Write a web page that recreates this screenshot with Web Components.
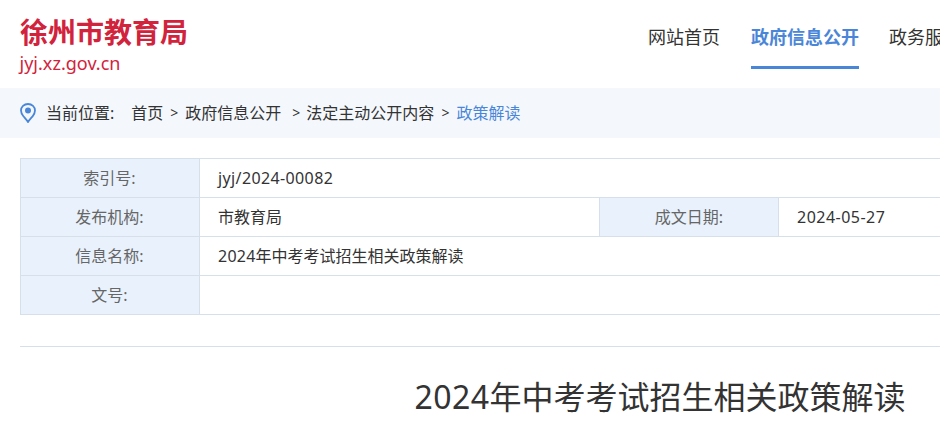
<!DOCTYPE html>
<html lang="zh"><head><meta charset="utf-8"><title>2024年中考考试招生相关政策解读</title>
<style>
html,body{margin:0;padding:0;background:#fff;overflow:hidden;height:431px}
body{font-family:"Noto Sans CJK SC","Noto Sans",sans-serif;color:#333;width:1320px}
</style></head><body>
<site-header></site-header>
<bread-crumb></bread-crumb>
<info-table></info-table>
<article-title><span style="letter-spacing:.5px">2024</span>年中考考试招生相关政策解读</article-title>
<script>
const F='"Noto Sans","Noto Sans CJK SC",sans-serif';
class Base extends HTMLElement{constructor(){super();this.attachShadow({mode:'open'}).innerHTML=this.constructor.html}}
class SiteHeader extends Base{static html=`<style>
:host{display:flex;height:88px;padding-left:20px;font-family:${F}}
.brand{flex:0 0 628px;display:flex;flex-direction:column}
.name{font-size:28px;font-weight:700;line-height:32px;margin-top:16px;color:#d2233c}
.url{font-size:18px;line-height:24px;margin:3px 0 0 0;letter-spacing:.02px;color:#d2233c;transform:translateX(-.5px)}
nav{display:flex;gap:30px;flex:none}
a{display:block;height:69px;box-sizing:border-box;font-size:18px;line-height:24px;padding-top:25px;color:#333;white-space:nowrap}
a.on{color:#4a86d8;font-weight:700;border-bottom:3px solid #4a86d8;margin-left:1px}
</style><div class="brand"><div class="name">徐州市教育局</div><div class="url">jyj.xz.gov.cn</div></div>
<nav><a>网站首页</a><a class="on">政府信息公开</a><a>政务服务</a></nav>`}
class BreadCrumb extends Base{static html=`<style>
:host{display:flex;align-items:center;height:50px;background:#f4f8fd;padding-left:20px;font:16px/24px ${F};color:#333;white-space:pre}
svg{width:16px;height:20px;margin-right:10px;flex:none}
.label{margin-right:17px}.sep{margin:0 7px;font-size:14px}.sep2{margin:0 6px 0 11px;font-size:14px}
.cur{color:#4a86d8}
</style><svg viewBox="0 0 16 20"><path d="M8 1C4 1 1 4 1 7.6c0 2.2 1 4 2.400 5.700C5 15.200 6.700 17 8 19c1.300-2 3-3.800 4.600-5.700C14 11.600 15 9.800 15 7.600 15 4 12 1 8 1z" fill="none" stroke="#4a86d8" stroke-width="1.800"/><circle cx="8" cy="7.600" r="3" fill="#4a86d8"/></svg>
<span class="label">当前位置:</span><span>首页</span><span class="sep">&gt;</span><span>政府信息公开</span><span class="sep2">&gt;</span><span>法定主动公开内容</span><span class="sep">&gt;</span><span class="cur">政策解读</span>`}
class InfoTable extends Base{static html=`<style>
:host{display:block;margin:20px 20px 0;width:1280px;font:16px/24px ${F};color:#333}
.t{display:grid;grid-template-columns:179px 399px 180px 1fr;grid-auto-rows:39px;border:solid #d5e0eb;border-width:1px 1px 0 1px;box-sizing:border-box}
.t>div{display:flex;align-items:center;border-bottom:1px solid #d5e0eb;box-sizing:border-box}
.k{background:#e9f2fc;color:#666;justify-content:center;border-right:1px solid #d5e0eb;padding-right:1px}
.v{padding-left:18px}
.w{grid-column:span 3}
.k2{border-left:1px solid #d5e0eb;padding-right:0}
.l{letter-spacing:.38px}.l2{letter-spacing:.48px}.d{letter-spacing:.25px}
hr{border:0;border-top:1px solid #d5e0eb;margin:31px 0 0}
</style><div class="t">
<div class="k">索引号:</div><div class="v w"><span class="l">jyj/2024-00082</span></div>
<div class="k">发布机构:</div><div class="v">市教育局</div><div class="k k2">成文日期:</div><div class="v"><span class="l2">2024-05-27</span></div>
<div class="k">信息名称:</div><div class="v w"><span><span class="d">2024</span>年中考考试招生相关政策解读</span></div>
<div class="k">文号:</div><div class="v w"></div>
</div><hr>`}
class ArticleTitle extends Base{static html=`<style>
:host{display:block;margin:25px 20px 0;width:1280px;text-align:center;font:32px/50px ${F};color:#333}
</style><slot></slot>`}
customElements.define('site-header',SiteHeader);
customElements.define('bread-crumb',BreadCrumb);
customElements.define('info-table',InfoTable);
customElements.define('article-title',ArticleTitle);
</script>
</body></html>
